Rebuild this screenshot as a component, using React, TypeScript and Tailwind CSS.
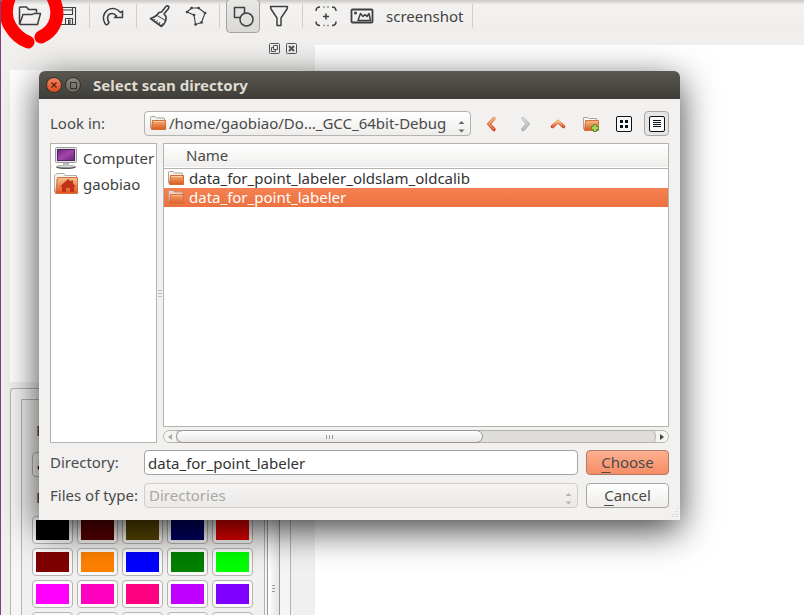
import type { ReactNode } from 'react';

const swatches = [
  '#000000', '#5a0000', '#5a4600', '#000064', '#e60000',
  '#800000', '#ff8000', '#0000ff', '#008000', '#00ff00',
  '#ff00ff', '#ff00bf', '#ff0080', '#bf00ff', '#8000ff',
  '#ffffff', '#ffffff', '#ffffff', '#ffffff', '#ffffff',
];

function Folder({ id, className }: { id: string; className: string }) {
  return (
    <svg viewBox="0 0 16 14" className={className} aria-hidden="true">
      <defs>
        <linearGradient id={id} x1="0" y1="0" x2="0" y2="1">
          <stop offset="0" stopColor="#f3b06c" />
          <stop offset="1" stopColor="#dc5723" />
        </linearGradient>
      </defs>
      <path d="M.5 12V1.5Q.5.5 1.5.5H5L6.5 2H14Q14.5 2 14.5 3V5H2.5V12Z" fill="#f5f3f0" stroke="#aaa29b" />
      <path d="M2.5 4.5H15.5V13.5H1.5Z" fill={`url(#${id})`} stroke="#d06c37" />
      <path d="M3.5 5.5H14.5" stroke="#fad0a4" />
    </svg>
  );
}

function Home() {
  return (
    <svg viewBox="0 0 24 22" className="h-[22px] w-6 shrink-0" aria-hidden="true">
      <defs>
        <linearGradient id="home" x1="0" y1="0" x2="0" y2="1">
          <stop offset="0" stopColor="#f5c48f" />
          <stop offset="1" stopColor="#e0501d" />
        </linearGradient>
      </defs>
      <path d="M.5 19V2.5Q.5 1.5 1.5 1.5H2L2.500.5H10L11 2.500H22.500V6H3V19Z" fill="#f8f6f3" stroke="#b4aba3" />
      <path d="M3.500 4.500H23.500V20.500H1.500Z" fill="url(#home)" stroke="#d8713d" />
      <path d="M14 6L6 13.500H8V19H12V15H16V19H20V13.500H22L19 10.500V7.500H17V8.500Z" fill="#c23218" />
    </svg>
  );
}

function Monitor() {
  return (
    <svg viewBox="0 0 24 24" className="h-6 w-6 shrink-0" aria-hidden="true">
      <defs>
        <linearGradient id="screen" x1="0" y1="0" x2="1" y2="1">
          <stop offset="0" stopColor="#6b247d" />
          <stop offset=".5" stopColor="#a545ad" />
          <stop offset="1" stopColor="#632176" />
        </linearGradient>
      </defs>
      <rect x="1.500" y="1.500" width="21" height="15" rx="1" fill="#e5e5e5" stroke="#9a9a9a" />
      <rect x="3.500" y="3.500" width="17" height="11" fill="url(#screen)" stroke="#51245d" />
      <path d="M9 17H15V20H9Z" fill="#b9b9b9" />
      <ellipse cx="12" cy="21" rx="10" ry="2" fill="#555" />
      <ellipse cx="12" cy="20.300" rx="9" ry="1.200" fill="#d5d5d5" />
    </svg>
  );
}

function ToolIcon({ children }: { children: ReactNode }) {
  return (
    <svg viewBox="0 0 24 24" className="h-6 w-6 shrink-0" fill="none" stroke="#3f3f3f" strokeWidth="1.500" strokeLinejoin="round" aria-hidden="true">
      {children}
    </svg>
  );
}

function Tool({ label, active, children }: { label: string; active?: boolean; children: ReactNode }) {
  return (
    <button
      type="button"
      aria-label={label}
      className={
        active
          ? 'flex h-[34px] w-[34px] shrink-0 items-center justify-center rounded border border-[#a5a39f] bg-linear-to-b from-[#e8e7e5] to-[#dad9d7]'
          : 'flex h-[34px] w-[34px] shrink-0 items-center justify-center'
      }
    >
      {children}
    </button>
  );
}

const Separator = () => <div className="mx-1 h-6 w-px shrink-0 bg-[#d0ceca]" />;

function Toolbar() {
  return (
    <div role="toolbar" className="flex h-8 shrink-0 items-center gap-0.5 bg-linear-to-b from-[#c9c8c6] via-[#f3f2f1] via-15% to-[#efeeec] pl-3">
      <Tool label="Open">
        <ToolIcon>
          <path d="M1.500 20.500V3.500L2.500 3H8.500L10.500 5.500H18.500V8.500M1.500 20.500H19.500L22.500 9.500H16L14.500 10.500H5L1.500 20.500" />
        </ToolIcon>
      </Tool>
      <Tool label="Save">
        <ToolIcon>
          <path d="M3.500 3.500H21.500V20.500H3.500ZM7.500 3.500V10.500H18.500V3.500M7.500 6H18.500M11.500 20V14.500H18.500V20M14.500 16V20H16V16Z" strokeWidth="1.100" />
        </ToolIcon>
      </Tool>
      <Separator />
      <Tool label="Redo">
        <ToolIcon>
          <path d="M6.500 20.500L8 18.500C5 14 7 9.500 11 9.500C13 9.500 14.500 10.500 15.500 12L13.500 13.500H21.500V7L19.500 8.500C16.500 4.500 11 3 6.500 6C1.500 10 1.500 15.500 4 19.500Q5 21.500 6.500 20.500Z" />
        </ToolIcon>
      </Tool>
      <Separator />
      <Tool label="Brush">
        <ToolIcon>
          <path d="M2.500 14.500L13.500 22.500Q18.500 18.500 18 12.500L16 10L20.500 4.500Q21.500 2 19.500 1.700Q18 1.700 17.500 3L13.500 8L11 8.500Q8 13 2.500 14.500Z" strokeWidth="1.600" />
          <path d="M9 11.500L17.500 16.500M6 16.500L7 15M8.500 18L9.500 16.500M11 20L12 18M13.500 21L14.500 19.500" strokeWidth="1" />
        </ToolIcon>
      </Tool>
      <Tool label="Polygon">
        <ToolIcon>
          <path d="M3 8L7.500 4H14.500L21 9L17.500 18.500L11.500 20.500L10 11Z" strokeWidth="1.100" />
          <path d="M3 8h.1M7.500 4h.1M14.500 4h.1M21 9h.1M17.500 18.500h.1M11.500 20.500h.1M10 11h.1" strokeWidth="2.600" strokeLinecap="round" />
        </ToolIcon>
      </Tool>
      <Separator />
      <Tool label="Shapes" active>
        <ToolIcon>
          <path d="M9 13.500H3.500V3.500H13.500V9" />
          <circle cx="15.500" cy="15.500" r="6.500" />
        </ToolIcon>
      </Tool>
      <Tool label="Filter">
        <ToolIcon>
          <path d="M3.500 2.500H20.500L20 5L14 14V21.500H10V14L4 5Z" />
        </ToolIcon>
      </Tool>
      <Separator />
      <Tool label="Focus">
        <ToolIcon>
          <path d="M2 7Q2 3 6 3M18 3Q22 3 22 7M2 17.500Q2 21.500 6 21.500M22 17.500Q22 21.500 18 21.500M9.500 3H10.500M13.500 3H14.500M9.500 21.500H10.500M13.500 21.500H14.500M12 9.500V15.500M9 12.500H15" />
        </ToolIcon>
      </Tool>
      <button type="button" className="flex h-[34px] w-[121px] shrink-0 items-center gap-3 pl-[5px] text-[15px] text-[#3f3f3f]">
        <ToolIcon>
          <rect x="1.500" y="5.500" width="21" height="13" rx="1" strokeWidth="1.800" />
          <circle cx="5.500" cy="9" r="1.500" fill="#3f3f3f" stroke="none" />
          <path d="M8 16.500L10.500 9.500L13 12.500L15 10.500L17 12.500L19 9.500L20.500 16.500Z" />
        </ToolIcon>
        screenshot
      </button>
      <Separator />
    </div>
  );
}

function Workspace() {
  return (
    <div className="flex min-h-0 flex-1">
      <aside className="flex w-[314px] shrink-0 flex-col pl-[9px]">
        <div className="flex h-[38px] shrink-0 items-center justify-end gap-1.5 pr-[18px] pb-1.5">
          <button type="button" aria-label="Float panel">
            <svg viewBox="0 0 11 11" className="h-[11px] w-[11px]" fill="none" stroke="#555">
              <rect x=".5" y=".5" width="10" height="10" rx="1" />
              <path d="M4.500 2.500H8.500V6.500H4.500ZM4 4.500H2.500V8.500H6.500V7" />
            </svg>
          </button>
          <button type="button" aria-label="Close panel">
            <svg viewBox="0 0 11 11" className="h-[11px] w-[11px]" fill="none" stroke="#555">
              <rect x=".5" y=".5" width="10" height="10" rx="1" />
              <path d="M3 3L8 8M8 3L3 8" strokeWidth="2" />
            </svg>
          </button>
        </div>
        <div className="h-[312px] w-[292px] shrink-0 bg-white" />
        <div className="mt-1.5 flex min-h-0 w-[281px] flex-1 overflow-hidden rounded-t border border-b-0 border-[#b5b3af] bg-[#f5f5f5] pt-2.5 pl-2.5">
          <div className="w-[244px] shrink-0 border-t border-l border-r border-[#b5b3af] bg-[#f1f0ee] pl-2.5">
            <p className="mt-5 pl-1 text-[15px] leading-5 text-[#3f3f3f]">P</p>
            <div className="mt-3 h-[25px] w-[221px] rounded border border-[#b5b3af] bg-[#f7f7f6] pl-1 text-[15px]">a</div>
            <p className="mt-2.5 h-[29px] pl-1 text-[15px] leading-5 text-[#3f3f3f]">F</p>
            <div className="grid w-[221px] grid-cols-5 gap-1">
              {swatches.map((color, i) => (
                <button key={i} type="button" aria-label={`Label ${i + 1}`} className="h-7 rounded border border-[#b5b3af] bg-[#fafafa] p-[3px]">
                  <span className="block h-5" style={{ backgroundColor: color }} />
                </button>
              ))}
            </div>
          </div>
          <div className="ml-0.5 flex w-[13px] shrink-0 flex-col items-center justify-end gap-0.5 border-x border-[#999] bg-linear-to-r from-white to-[#e4e4e4] pb-[23px]">
            <i className="h-px w-[3px] bg-[#999]" />
            <i className="h-px w-[3px] bg-[#999]" />
            <i className="h-px w-[3px] bg-[#999]" />
          </div>
        </div>
      </aside>
      <main className="mt-[13px] flex-1 bg-white" />
    </div>
  );
}

function Arrows({ color }: { color: string }) {
  return (
    <svg viewBox="0 0 7 13" className="pointer-events-none absolute right-1.5 bottom-[3px] h-[13px] w-[7px]" fill={color} aria-hidden="true">
      <path d="M.5 4L3.500 1L6.500 4ZM.5 9.500H6.500L3.500 12.500Z" />
    </svg>
  );
}

function Chevron({ d, from, to, id, label }: { d: string; from: string; to: string; id: string; label: string }) {
  return (
    <button type="button" aria-label={label} className="flex h-[25px] w-[25px] items-center justify-center">
      <svg viewBox="0 0 16 16" className="h-4 w-4" fill="none" aria-hidden="true">
        <defs>
          <linearGradient id={id} x1="0" y1="0" x2="0" y2="1">
            <stop offset="0" stopColor={from} />
            <stop offset="1" stopColor={to} />
          </linearGradient>
        </defs>
        <path d={d} stroke={`url(#${id})`} strokeWidth="3.500" strokeLinecap="round" />
        <path d={d} stroke="#fff" strokeOpacity=".35" strokeWidth="1.200" strokeLinecap="round" />
      </svg>
    </button>
  );
}

function LookInBar() {
  return (
    <div className="flex items-center">
      <label htmlFor="look-in" className="w-[94px] shrink-0">Look in:</label>
      <div className="relative min-w-0 flex-1">
        <Folder id="f-combo" className="pointer-events-none absolute top-[5px] left-1.5 h-[14px] w-4" />
        <select id="look-in" className="block h-[25px] w-full appearance-none rounded border border-[#b5b3af] bg-linear-to-b from-white to-[#eeedeb] pl-6">
          <option>/home/gaobiao/Do…_GCC_64bit-Debug</option>
        </select>
        <Arrows color="#6b6b6b" />
      </div>
      <div className="ml-2 flex gap-2">
        <Chevron id="back" label="Back" d="M10 2.500L5 8L10 13.500" from="#ee9b5c" to="#d63a12" />
        <Chevron id="forward" label="Forward" d="M6 2.500L11 8L6 13.500" from="#c9c9c9" to="#a8a8a8" />
        <Chevron id="up" label="Parent directory" d="M2.500 10.500L8 5.500L13.500 10.500" from="#f0a766" to="#d63a12" />
        <button type="button" aria-label="Create folder" className="flex h-[25px] w-[25px] items-center justify-center">
          <svg viewBox="0 0 16 16" className="h-4 w-4" aria-hidden="true">
            <defs>
              <linearGradient id="new" x1="0" y1="0" x2="0" y2="1">
                <stop offset="0" stopColor="#f4bd84" />
                <stop offset="1" stopColor="#dc5723" />
              </linearGradient>
            </defs>
            <path d="M.5 13V1.500H5L6 2.500H13.500V5H2.500V13Z" fill="#f8f6f3" stroke="#aaa29b" />
            <path d="M2.500 4.500H15.500V14.500H1.500Z" fill="url(#new)" stroke="#d8713d" />
            <path d="M10.500 8.500H13.500V10.500H15.500V13.500H13.500V15.500H10.500V13.500H8.500V10.500H10.500Z" fill="#a5d560" stroke="#5a8e25" />
          </svg>
        </button>
        <button type="button" aria-label="Icon view" className="flex h-[25px] w-[25px] items-center justify-center">
          <svg viewBox="0 0 16 16" className="h-4 w-4" aria-hidden="true">
            <rect x=".5" y=".5" width="15" height="15" rx="1.500" fill="#f5faff" stroke="#111" />
            <path d="M4 4H7V7H4ZM9 4H12V7H9ZM4 9H7V12H4ZM9 9H12V12H9Z" fill="#111" />
          </svg>
        </button>
        <button type="button" aria-label="Detail view" className="flex h-[25px] w-[25px] items-center justify-center rounded border border-[#aaa8a4] bg-[#e6e5e3]">
          <svg viewBox="0 0 16 16" className="h-4 w-4 shrink-0" aria-hidden="true">
            <rect x=".5" y=".5" width="15" height="15" rx="1.500" fill="#f5faff" stroke="#111" />
            <path d="M4 4.500H12M4 6.500H12M4 8.500H12M4 10.500H12" stroke="#111" />
          </svg>
        </button>
      </div>
    </div>
  );
}

function FileTable() {
  return (
    <div className="flex min-w-0 flex-1 flex-col">
      <div className="flex-1 border border-[#b5b3af] bg-white">
        <table className="w-full border-collapse">
          <thead>
            <tr className="h-6 border-b border-[#b5b3af] bg-linear-to-b from-white to-[#efeeec] leading-[23px]">
              <th scope="col" className="p-0 pl-[22px] text-left font-normal">Name</th>
            </tr>
          </thead>
          <tbody className="leading-[19px]">
            <tr>
              <td className="p-0 pl-1 text-[#333]">
                <span className="flex items-center gap-[5px]"><Folder id="f-row1" className="h-[14px] w-4" />data_for_point_labeler_oldslam_oldcalib</span>
              </td>
            </tr>
            <tr className="bg-linear-to-b from-[#f58152] to-[#ec713f] text-white">
              <td className="p-0 pl-1">
                <span className="flex items-center gap-[5px]"><Folder id="f-row2" className="h-[14px] w-4 opacity-70" />data_for_point_labeler</span>
              </td>
            </tr>
          </tbody>
        </table>
      </div>
      <div className="mt-[3px] flex h-[13px] rounded-full border border-[#b5b3af] bg-[#dedddb]">
        <button type="button" aria-label="Scroll left" className="flex w-3 items-center justify-center rounded-l-full bg-[#f4f4f3]">
          <svg viewBox="0 0 4 6" className="h-1.5 w-1" fill="#aaa"><path d="M4 0V6L0 3Z" /></svg>
        </button>
        <div className="flex flex-1 overflow-visible rounded-r-full border-r border-[#b5b3af]">
          <div className="-my-px flex h-[13px] w-[64%] items-center justify-center gap-0.5 rounded-full border border-[#979591] bg-linear-to-b from-white to-[#e8e7e5]">
            <i className="h-1 w-px bg-[#999]" />
            <i className="h-1 w-px bg-[#999]" />
            <i className="h-1 w-px bg-[#999]" />
          </div>
        </div>
        <button type="button" aria-label="Scroll right" className="flex w-3 items-center justify-center rounded-r-full bg-[#f4f4f3]">
          <svg viewBox="0 0 4 6" className="h-1.5 w-1" fill="#444"><path d="M0 0V6L4 3Z" /></svg>
        </button>
      </div>
    </div>
  );
}

function ScanDialog() {
  return (
    <section role="dialog" aria-labelledby="dialog-title" className="absolute top-[71px] right-[124px] left-[38px] rounded-t-md bg-[#f2f1f0] text-[15px] text-[#4a4a4a] shadow-[0_10px_36px_rgba(0,0,0,0.75)]">
      <header className="flex h-7 items-center rounded-t-md bg-linear-to-b from-[#59574e] to-[#3e3d39] pl-[7px]">
        <button type="button" aria-label="Close" className="flex h-4 w-4 items-center justify-center rounded-full border border-[#33322e] bg-linear-to-b from-[#f4845c] to-[#dc4a1c]">
          <svg viewBox="0 0 6 6" className="h-1.5 w-1.5" stroke="#53210f" strokeWidth="1.200"><path d="M.5.5L5.500 5.500M5.500.5L.5 5.500" /></svg>
        </button>
        <button type="button" aria-label="Maximize" className="ml-[3px] flex h-4 w-4 items-center justify-center rounded-full border border-[#33322e] bg-linear-to-b from-[#8a8880] to-[#66645c]">
          <span className="h-[7px] w-[7px] border border-[#33322e]" />
        </button>
        <h1 id="dialog-title" className="ml-3 text-[15px] font-bold text-[#dfdbd2]">Select scan directory</h1>
      </header>
      <div className="flex flex-col px-[11px] pt-3 pb-3">
        <LookInBar />
        <div className="mt-[7px] flex h-[300px]">
          <ul className="w-[107px] shrink-0 border border-[#b5b3af] bg-white py-px text-[#3f3f3f]">
            <li><button type="button" className="flex h-[26px] items-center gap-[5px] pl-[3px]"><Monitor />Computer</button></li>
            <li><button type="button" className="flex h-[26px] items-center gap-[5px] pl-[3px]"><Home />gaobiao</button></li>
          </ul>
          <div className="flex w-1.5 shrink-0 flex-col items-center justify-center gap-0.5">
            <i className="h-px w-1 bg-[#bbb]" />
            <i className="h-px w-1 bg-[#bbb]" />
            <i className="h-px w-1 bg-[#bbb]" />
          </div>
          <FileTable />
        </div>
        <form className="mt-[7px] grid grid-cols-[94px_1fr_91px] items-center gap-y-2">
          <label htmlFor="directory">Directory:</label>
          <input id="directory" type="text" defaultValue="data_for_point_labeler" className="h-[25px] min-w-0 rounded border border-[#a5a39f] bg-white px-[3px] text-[#333]" />
          <button type="button" className="ml-2 h-[25px] rounded border border-[#b27a62] bg-linear-to-b from-[#fdb090] to-[#f58c66] leading-[23px]">
            <span className="underline underline-offset-4">C</span>hoose
          </button>
          <label htmlFor="file-type" className="whitespace-nowrap">Files of type:</label>
          <div className="relative min-w-0">
            <select id="file-type" disabled className="block h-[25px] w-full appearance-none rounded border border-[#cfcdc9] bg-linear-to-b from-[#f5f4f3] to-[#ebeae8] pl-1 text-[#aaa8a5] opacity-100">
              <option>Directories</option>
            </select>
            <Arrows color="#b5b3af" />
          </div>
          <button type="button" className="ml-2 h-[25px] rounded border border-[#aaa8a4] bg-linear-to-b from-white to-[#eeedeb] leading-[23px]">
            <span className="underline underline-offset-4">C</span>ancel
          </button>
        </form>
      </div>
      <svg viewBox="0 0 10 10" className="absolute right-px bottom-0.5 h-2.5 w-2.5" fill="#d0ceca" aria-hidden="true">
        <path d="M8 0h1v1h-1zM6 3h1v1h-1zM8 3h1v1h-1zM3 6h1v1h-1zM6 6h1v1h-1zM8 6h1v1h-1zM0 8h1v1h-1zM3 8h1v1h-1zM6 8h1v1h-1zM8 8h1v1h-1z" />
      </svg>
    </section>
  );
}

export default function App() {
  return (
    <div className="relative flex h-screen flex-col overflow-hidden border-l border-[#803f7c] bg-[#f1f0ee] font-['Noto_Sans','Open_Sans',sans-serif]">
      <Toolbar />
      <Workspace />
      <ScanDialog />
      <svg viewBox="0 0 66 52" className="pointer-events-none absolute top-0 -left-px h-[52px] w-[66px]" fill="none" stroke="#ff0000" strokeWidth="13" strokeLinecap="round" aria-hidden="true">
        <path d="M11 -6C5 6 5 18 10 26Q17 38 28 42" />
        <path d="M51 -6C58 6 58 17 54 25Q50 33 41 37" />
      </svg>
    </div>
  );
}
